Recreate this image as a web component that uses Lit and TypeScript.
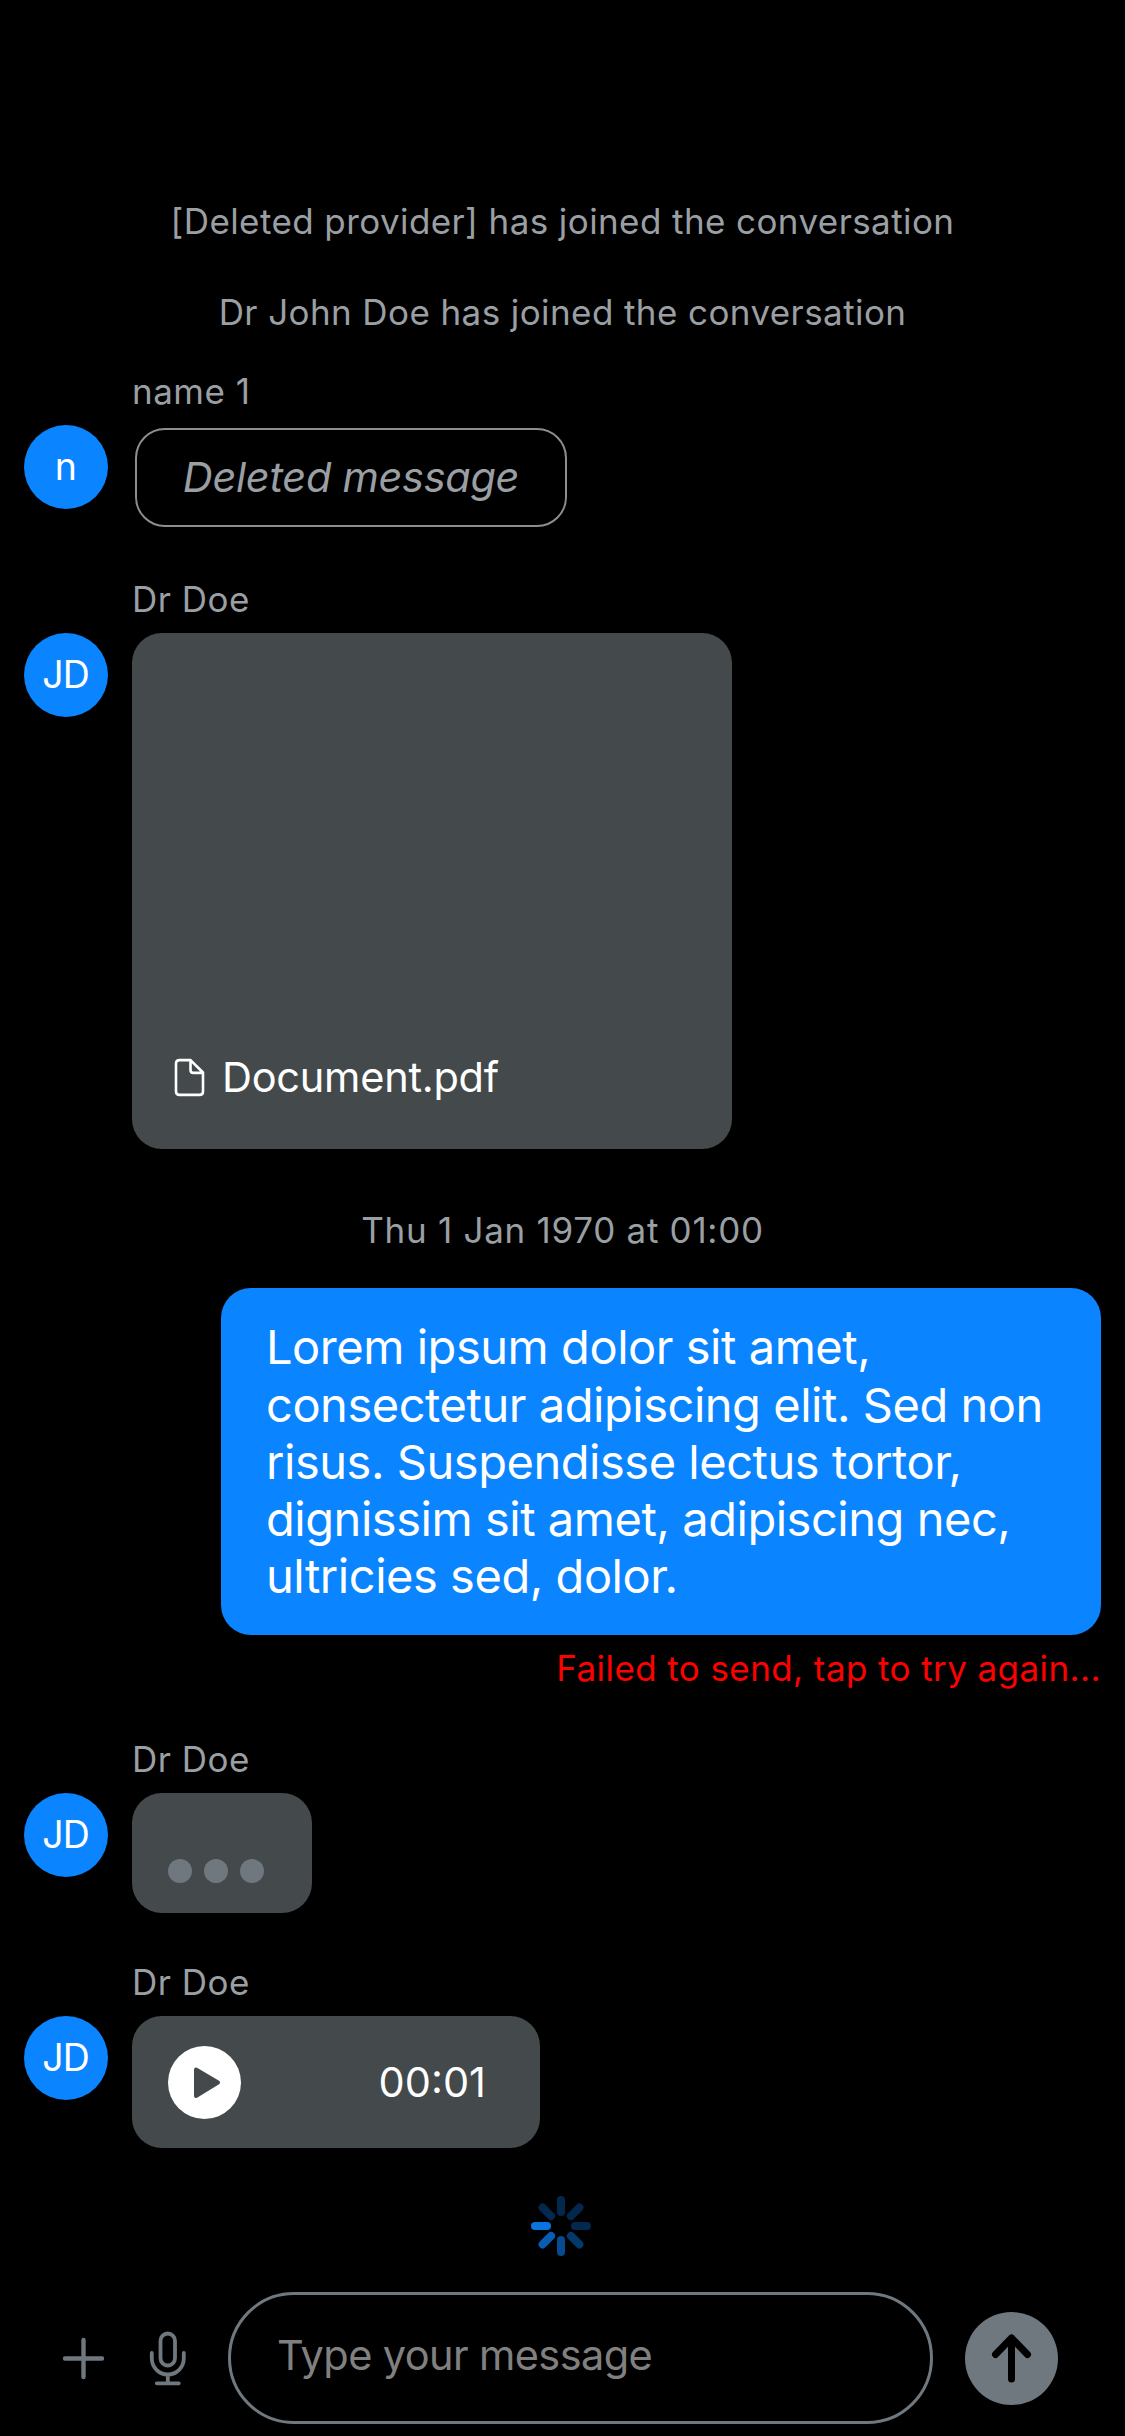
import { LitElement, html, svg, css } from "lit";
import { customElement, property } from "lit/decorators.js";

@customElement("chat-message")
class ChatMessage extends LitElement {
  @property() author = "";
  @property() initials = "";

  static styles = css`
    :host { display: grid; grid-template-columns: 84px auto; column-gap: 24px; row-gap: 12px; justify-content: start; padding-left: 24px; margin-top: 48px; }
    .author { grid-column: 2; font-size: 35px; line-height: 43px; letter-spacing: 0.5px; color: #9a9fa3; padding-left: 0; }
    .avatar { box-sizing: border-box; grid-column: 1; width: 84px; height: 84px; padding: 0 1px 1px 0; border-radius: 50%; background: #0a84ff; color: #fff; display: flex; align-items: center; justify-content: center; font-size: 37.5px; letter-spacing: -0.9px; }
    .content { grid-column: 2; display: flex; }
  `;

  render() {
    return html`
      <div class="author">${this.author}</div>
      <div class="avatar">${this.initials}</div>
      <div class="content"><slot></slot></div>
    `;
  }
}

@customElement("app-root")
class AppRoot extends LitElement {
  static styles = css`
    :host { display: block; background: #000; font-family: Inter, "Liberation Sans", sans-serif; font-weight: 400; }
    .screen { box-sizing: border-box; width: 1125px; height: 2436px; overflow: hidden; padding-top: 200px; display: flex; flex-direction: column; background: #000; }
    .note { text-align: center; font-size: 35px; line-height: 43px; letter-spacing: 0.41px; color: #9a9fa3; white-space: nowrap; }
    .second { margin-top: 48px; }
    .date { margin-top: 60px; letter-spacing: 0.72px; }
    .first { margin-top: 36px; }
    .bubble { box-sizing: border-box; border-radius: 30px; background: #44494c; color: #fff; display: flex; font-size: 41.5px; white-space: nowrap; }
    .deleted { width: 432px; height: 99px; margin: 3px; padding-bottom: 1px; border: 2px solid #8c8f91; background: none; color: #9a9fa3; align-items: center; justify-content: center; font-style: italic; letter-spacing: -0.3px; }
    .document { width: 600px; height: 516px; align-items: flex-end; padding: 0 42px 48px; line-height: 47px; letter-spacing: -0.25px; }
    .document svg { width: 31px; height: 47px; margin-right: 17px; }
    .typing { width: 180px; height: 120px; padding: 66px 36px 0; gap: 12px; }
    .dot { width: 24px; height: 24px; border-radius: 50%; background: #70787f; }
    .audio { width: 408px; height: 132px; padding: 0 54px 0 36px; align-items: center; justify-content: space-between; }
    .audio svg { width: 73px; height: 73px; margin-top: 1px; }
    .outgoing { align-self: flex-end; margin: 36px 24px 0 0; width: 880px; height: 347px; padding: 0 45px; background: #0a84ff; font-size: 47px; line-height: 57.3px; letter-spacing: -0.46px; align-items: center; }
    .failed { align-self: flex-end; margin: 12px 24px 0 0; font-size: 35px; line-height: 43px; letter-spacing: 0.41px; color: #f00; }
    .spinner { width: 60px; height: 60px; margin: 48px 0 0 531px; flex: none; }
    .composer { display: flex; align-items: center; margin-top: 36px; height: 132px; flex: none; padding-left: 60px; }
    .plus { width: 48px; height: 48px; }
    .mic { width: 48px; height: 60px; margin-left: 36px; }
    .field { box-sizing: border-box; width: 705px; height: 132px; margin-left: 36px; border: 3px solid #70787f; border-radius: 66px; padding: 0 0 6px 46px; display: flex; align-items: center; color: #808080; font-size: 41.5px; letter-spacing: -0.6px; }
    .send { width: 93px; height: 93px; margin-left: 32px; }
  `;

  render() {
    const opacities = [0.3, 0.3, 0.3, 0.43, 0.56, 0.7, 0.87, 0.3];
    return html`
      <main class="screen">
        <div class="note">[Deleted provider] has joined the conversation</div>
        <div class="note second">Dr John Doe has joined the conversation</div>

        <chat-message class="first" author="name 1" initials="n">
          <div class="bubble deleted"><span>Deleted message</span></div>
        </chat-message>

        <chat-message author="Dr Doe" initials="JD">
          <div class="bubble document">
            <svg viewBox="0 0 31 47" fill="none" stroke="#fff" stroke-width="2.6" stroke-linejoin="round">
              <path d="M6 6.1H16.5L29 18.5V37.5Q29 40.9 25.6 40.9H5.4Q2 40.9 2 37.5V9.5Q2 6.1 5.4 6.1H16.5V16Q16.5 18.9 19.4 18.9H29" />
            </svg>
            <span>Document.pdf</span>
          </div>
        </chat-message>

        <div class="note date">Thu 1 Jan 1970 at 01:00</div>
        <div class="bubble outgoing">
          <div>
            Lorem ipsum dolor sit amet,<br />consectetur adipiscing elit. Sed non<br />risus. Suspendisse lectus tortor,<br />dignissim sit amet, adipiscing nec,<br />ultricies sed, dolor.
          </div>
        </div>
        <div class="failed">Failed to send, tap to try again...</div>

        <chat-message author="Dr Doe" initials="JD">
          <div class="bubble typing">
            <div class="dot"></div><div class="dot"></div><div class="dot"></div>
          </div>
        </chat-message>

        <chat-message author="Dr Doe" initials="JD">
          <div class="bubble audio">
            <svg viewBox="0 0 73 73">
              <circle cx="36.5" cy="36.5" r="36.5" fill="#fff" />
              <path d="M28 23.5L50 36.5L28 50Z" fill="#44494c" stroke="#44494c" stroke-width="4" stroke-linejoin="round" />
            </svg>
            <span>00:01</span>
          </div>
        </chat-message>

        <svg class="spinner" viewBox="-30 -30 60 60">
          ${opacities.map(
            (o, i) => svg`<rect x="-4" y="-30" width="8" height="20" rx="4" fill="#0a84ff" fill-opacity=${o} transform="rotate(${i * 45})" />`
          )}
        </svg>

        <div class="composer">
          <svg class="plus" viewBox="0 0 48 48" stroke="#70787f" stroke-width="4.4" stroke-linecap="round">
            <path d="M23.5 6V43M5 24.5H42" />
          </svg>
          <svg class="mic" viewBox="0 0 48 60" fill="none" stroke="#70787f" stroke-width="3.8" stroke-linecap="round">
            <rect x="16.5" y="5.5" width="14.5" height="32" rx="7.25" />
            <path d="M7.8 25V30.5A16 16 0 0 0 39.8 30.5V25M23.8 47V55M12.8 55.3H34.8" />
          </svg>
          <div class="field"><span>Type your message</span></div>
          <svg class="send" viewBox="0 0 93 93">
            <circle cx="46.5" cy="46.5" r="46.5" fill="#70787f" />
            <path d="M46.5 67V26M30.5 42.5L46.5 26L62.5 42.5" fill="none" stroke="#000" stroke-width="7" stroke-linecap="round" stroke-linejoin="round" />
          </svg>
        </div>
      </main>
    `;
  }
}
